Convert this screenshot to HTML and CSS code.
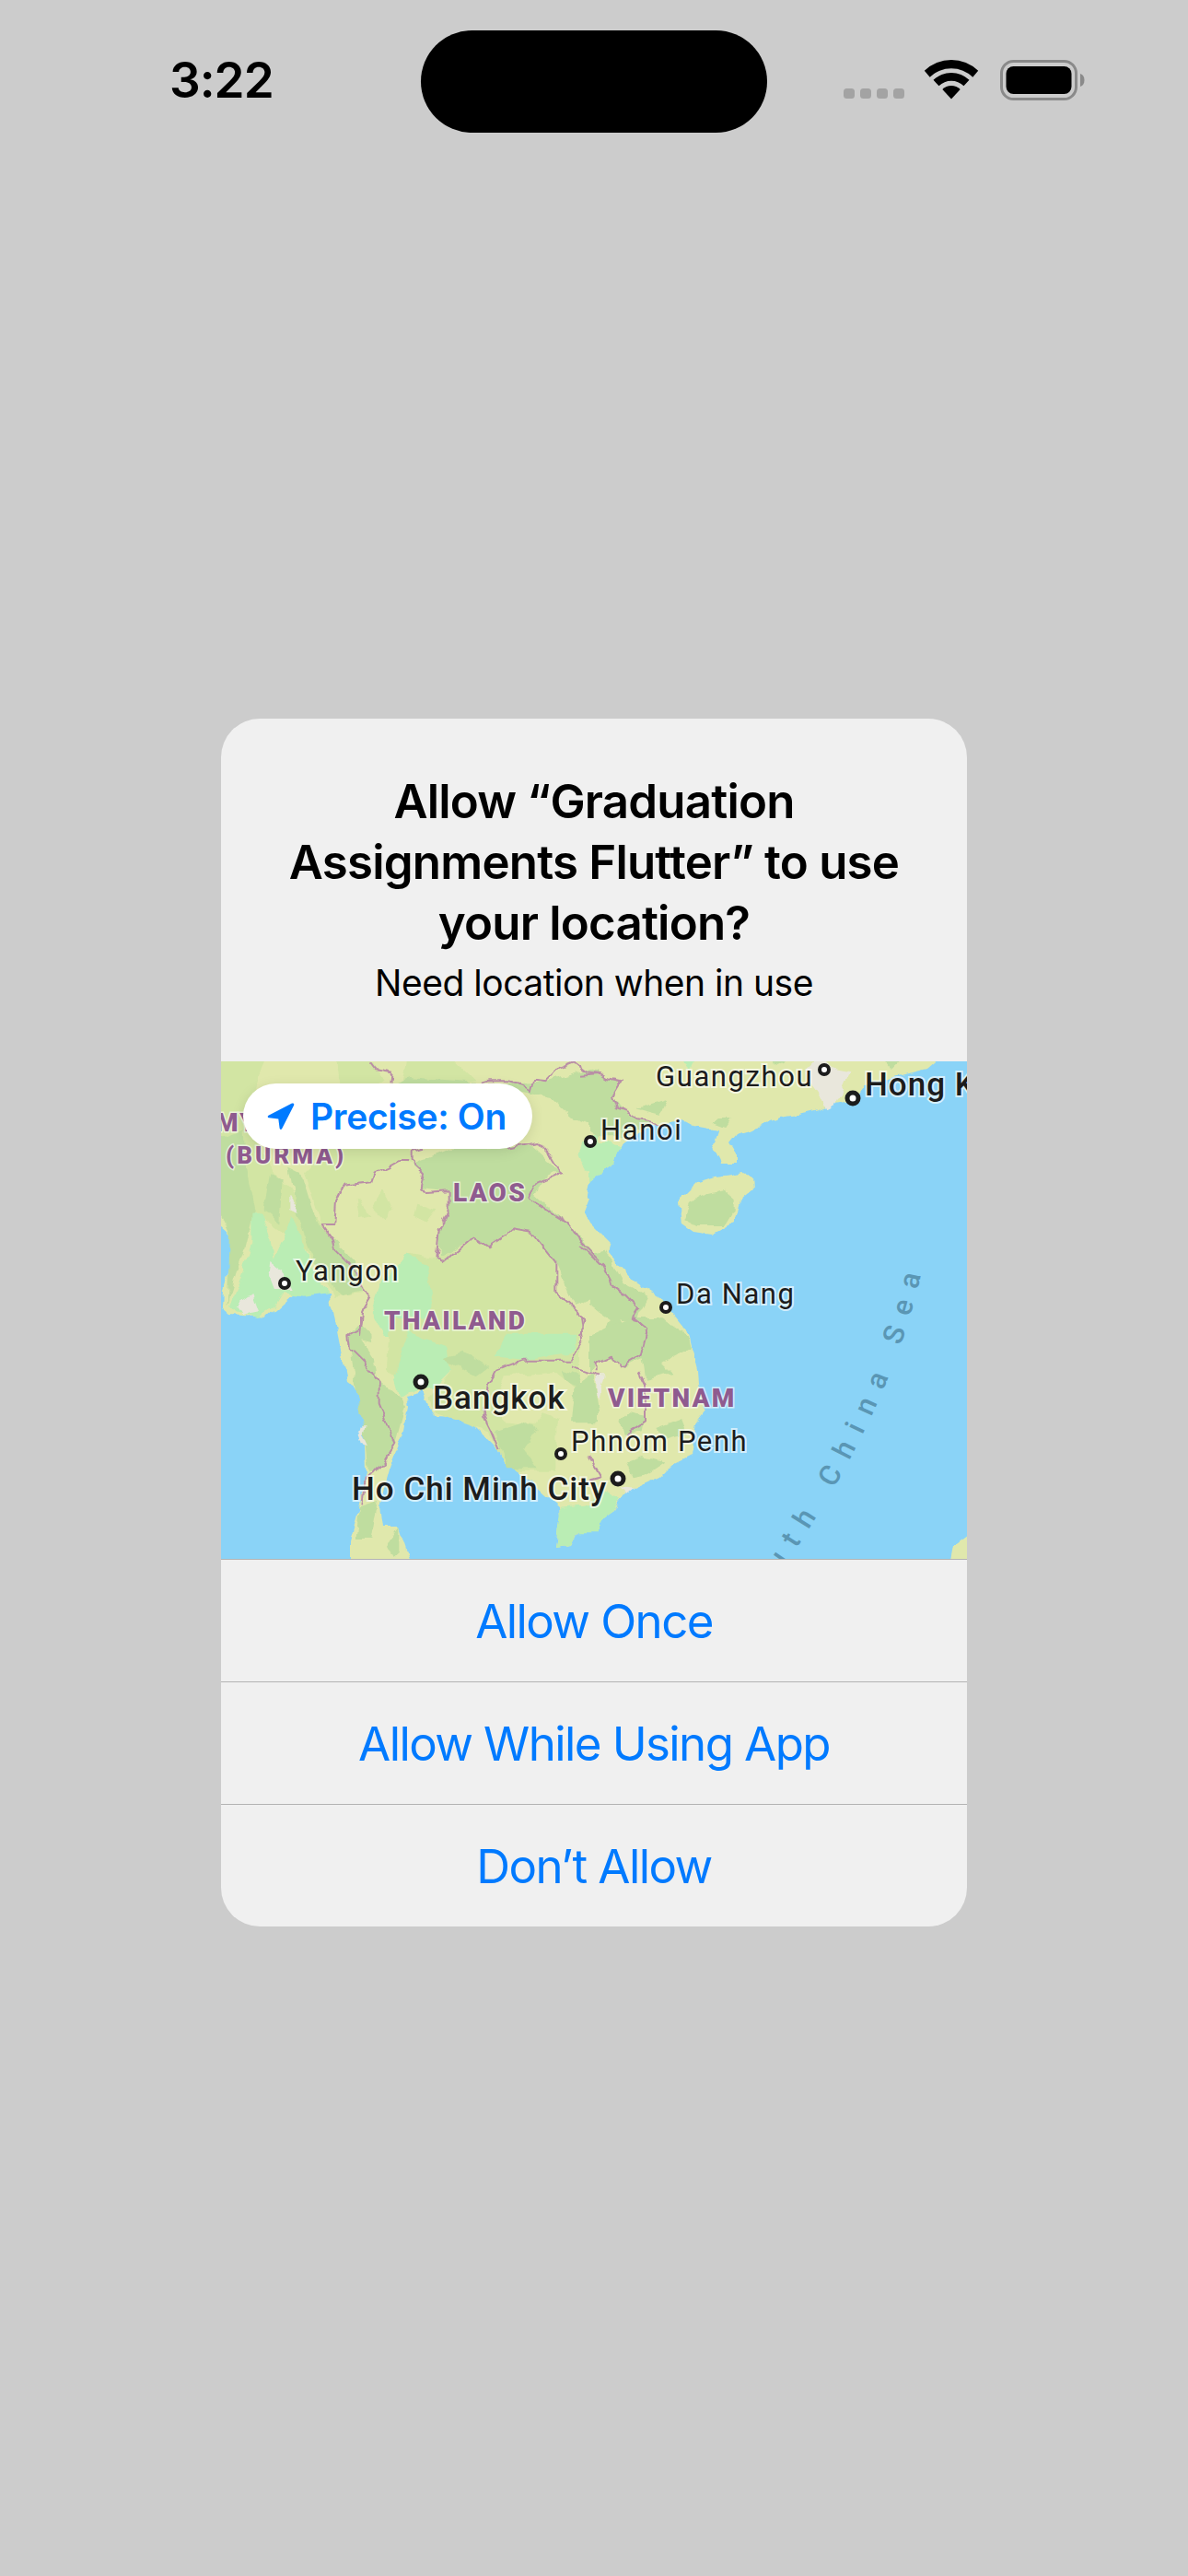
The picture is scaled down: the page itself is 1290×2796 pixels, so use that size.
FILE: index.html
```html
<!DOCTYPE html>
<html lang="en">
<head>
<meta charset="utf-8">
<title>Location permission</title>
<link rel="stylesheet" href="styles.css">
</head>
<body>
<header class="status">
  <div class="time">3:22</div>
  <div class="island"></div>
  <div class="indicators">
    <div class="signal"><i></i><i></i><i></i><i></i></div>
    <svg class="wifi" width="58" height="43" viewBox="0 0 58 43"><path d="M-.2 11.8A42 42 0 0 1 58.2 11.8L52.3 18.7A33.5 33.5 0 0 0 5.700 18.700Z"/><path d="M9.500 21.800A28 28 0 0 1 48.500 21.800L42.500 28.300A19.500 19.500 0 0 0 15.500 28.300Z"/><path d="M19.300 31.900A14 14 0 0 1 38.700 31.900L29 42.500Z"/></svg>
    <svg class="battery" width="92" height="44" viewBox="0 0 92 44"><rect x="1.500" y="1.500" width="81" height="41" rx="13" class="batt-shell"/><rect x="6.500" y="7" width="71" height="30" rx="8"/><path class="batt-cap" d="M87 15C90 16 91.500 18.500 91.500 22S90 28 87 29Z"/></svg>
  </div>
</header>

<main class="alert">
  <section class="alert-head">
    <h1 class="alert-title">Allow “Graduation Assignments Flutter” to use your location?</h1>
    <p class="alert-sub">Need location when in use</p>
  </section>

  <div class="map">
    <svg class="map-art" width="810" height="540" viewBox="0 0 810 540">
      <defs>
        <filter id="rough" x="-5%" y="-5%" width="110%" height="110%">
          <feTurbulence type="fractalNoise" baseFrequency=".07" numOctaves="2" seed="4"/>
          <feDisplacementMap in="SourceGraphic" scale="9" xChannelSelector="R" yChannelSelector="G"/>
        </filter>
      </defs>
      <rect class="sea" width="810" height="540"/>
      <g class="rough">
      <!-- land masses -->
      <path class="y" d="M-12 -12H790L767 8 700 25 687 42 667 46 648 53 627 58 607 61 587 70 560 78 552 88 560 101 560 111 543 111 533 91 538 75 513 70 500 63 470 68 433 91 427 111 400 131 393 161 400 175 423 198 420 208 447 238 477 258 507 295 517 335 518 348 525 378 515 391 510 428 490 438 477 451 443 466 433 478 427 488 400 506 387 511 380 525 363 528 368 491 367 485 320 441 307 435 298 418 273 393 257 386 230 385 220 358 200 363 203 375 198 401 183 441 172 481 175 505 193 505 203 535 210 552H140L140 521 150 485 157 445 155 391 147 355 137 348 123 278 118 251 80 251 50 278 10 275 2 268 3 248 13 215 10 188 -12 168Z"/>
      <path class="y" d="M497 151 517 131 537 125 557 123 567 120 577 125 578 138 563 151 557 175 533 188 513 185 500 176Z"/>
      <path class="y" d="M790 552 795 525 822 505V552Z"/>

      <g transform="translate(-10 -12) scale(.33333)">
        <path class="m" d="M0 0H190L150 90 100 250 0 240ZM0 240 120 250 200 400 360 570 400 640 470 720 490 790 400 800 300 640 130 520 0 540Z"/>
        <path class="d" d="M0 290 100 260 110 380 140 520 110 640 90 700 50 830 60 600 30 540Z"/>
        <path class="d" d="M190 400 230 420 220 560 170 520Z"/>
        <path class="d" d="M250 380 290 400 340 560 400 620 470 690 490 780 420 800 340 700 280 540Z"/>
        <path class="l" d="M130 530 160 525 190 610 200 680 260 540 300 630 320 700 380 790 300 800 230 790 200 840 150 870 80 850 60 830 100 720 130 630Z"/>
        <path class="m" d="M400 0H500L560 100 470 180 420 120ZM640 0H760L860 100 700 130 620 100Z"/>
        <path class="d" d="M640 90 900 110 1100 100 1230 60 1260 70V250L1180 220 1100 150 1000 130 800 220 640 300 480 340 420 200 560 120Z"/>
        <path class="m" d="M440 260 640 300 650 370 610 360 530 400 520 430 430 440 405 490 400 570 360 570 300 400Z"/>
        <path class="d" d="M650 370 780 320 1040 310 1140 400 1050 470 1160 560 1260 680V800L1180 830 1120 690 1040 590 980 580 900 640 850 605 800 640 740 680 740 590 770 520 770 460 680 450 690 400Z"/>
        <path class="m" d="M560 450 590 520 560 550 520 510ZM470 480 520 540 480 550ZM670 500 730 520 700 560 660 540Z"/>
        <path class="m" d="M640 660 730 680 810 640 850 605 900 640 980 580 1040 590 1120 690 1120 790 1190 850 1210 930H1000L720 930 550 780Z"/>
        <path class="l" d="M550 760 640 660 700 700 720 830 650 930H560L520 850Z"/>
        <path class="y" d="M1100 400 1140 400 1230 480 1210 530 1160 560 1050 470ZM1130 170 1180 260 1120 220Z"/>
        <path class="l" d="M1220 280 1260 270V400L1220 400 1190 340Z"/>
        <path class="c" d="M190 690 230 720 260 780 205 780 185 730ZM80 830 130 795 150 850 100 860ZM250 470 285 530 250 520Z"/>
      </g>

      <g transform="translate(400 -12) scale(.33333)">
        <path class="l" d="M0 300H60L100 310 80 370 0 430Z"/>
        <path class="d" d="M0 80H40L100 100 75 150 110 200 200 240 100 280 30 280 0 260ZM150 190 250 160 230 210ZM590 20H670L600 50ZM950 20H1020L980 60ZM420 225 460 225 440 255 400 240Z"/>
        <path class="l" d="M290 20H350L330 60Z"/>
        <path class="c" d="M710 60 750 20 800 60 850 70 800 180 770 195 745 140 700 80Z"/>
        <path class="d" d="M330 500 380 470 440 455 470 480 470 520 440 570 350 570 310 550Z"/>
        <path class="d" d="M0 660 50 650 110 760 190 800 150 880 190 930H0Z"/>
        <path class="y" d="M0 830 70 880 40 930H0ZM100 870 190 910 130 930Z"/>
      </g>

      <g transform="translate(-10 278) scale(.33333)">
        <path class="d" d="M445 60 480 20 520 60 540 200 610 260 630 290 600 400 540 500 510 500 490 340 470 230Z"/>
        <path class="y" d="M490 70 570 90 590 170 540 150Z"/>
        <path class="m" d="M580 0 1200 0 1200 200 1120 340 1120 500 1000 500 950 470 900 370 720 310 710 260 780 170 640 240 570 170Z"/>
        <path class="l" d="M590 190 640 50 770 100 780 170 720 230 640 240 610 260Z"/>
        <path class="l" d="M920 130 960 50 1190 50 1180 110 1010 140Z"/>
        <path class="d" d="M750 130 820 110 900 160 860 190ZM1140 170 1200 190 1190 230 1150 210Z"/>
        <path class="y" d="M950 190 1120 180 1190 240 1160 340 1080 310 1050 350 950 340 920 280Z"/>
        <path class="d" d="M920 370 1010 340 1060 360 1020 430 1060 490 960 490 950 450Z"/>
        <path class="d" d="M1180 230 1240 180 1260 300 1260 340 1170 340Z"/>
        <path class="l" d="M1120 750 1135 620 1260 610V700L1190 700 1170 740Z"/>
        <path class="d" d="M480 620 540 600 520 720 470 720ZM570 740 610 680 610 760 590 780Z"/>
        <path class="c" d="M488 355 500 355 492 385 508 420 485 415 478 390Z"/>
      </g>

      <g transform="translate(400 278) scale(.33333)">
        <path class="d" d="M0 60 130 0H230L320 60 330 100 240 150 270 180 180 200 170 130 110 160 70 130 20 150 0 180Z"/>
        <path class="d" d="M100 340 130 310 180 320 170 370 110 380ZM220 360 300 330 320 380 250 400ZM120 470 170 450 250 470 190 510 140 520Z"/>
        <path class="l" d="M0 600 40 560 100 590 80 630 40 660 0 685Z"/>
        <path class="c" d="M20 190 50 190 30 270 20 240ZM100 555 140 560 120 575Z"/>
      </g>

      <!-- borders -->
      <g class="borders">
        <g transform="translate(-10 -12) scale(.33333)">
          <path d="M515 40 530 60 585 70 580 100"/>
          <path d="M870 110 900 100 970 100 1010 110 1040 130 1050 95 1090 100 1130 60 1180 40 1220 70 1260 75"/>
          <path d="M640 360 610 360 575 380 530 400 520 430 430 440 405 490 400 570 360 570 390 610 400 650 470 720 490 780 520 800 490 850 480 930"/>
          <path d="M690 320 650 330 650 360 690 400 680 450 700 465 770 460 770 520 740 590 730 680 750 690 810 640 850 605 900 640 960 600 980 580 1040 590 1120 690 1120 790 1190 850 1210 880 1200 930"/>
          <path d="M960 320 1060 300 1110 350 1140 400 1050 440 1030 480 1160 560 1200 620 1260 680"/>
        </g>
        <g transform="translate(400 -12) scale(.33333)">
          <path d="M-30 80 35 75 60 90 105 100 75 150 90 190 130 205 160 225 230 240"/>
          <path d="M-30 640 0 660 40 700 70 760 110 790 160 840 140 870 190 910 185 930"/>
        </g>
        <g transform="translate(-10 278) scale(.33333)">
          <path d="M480 0 480 40 445 60 450 100 520 170 545 210 545 280 570 340 595 410 560 470 530 505 500 520 490 610"/>
          <path d="M1200 0 1210 80 1170 140 1010 140 930 170 900 220 885 320 910 370 935 430"/>
          <path d="M1170 160 1260 190"/>
        </g>
        <g transform="translate(400 278) scale(.33333)">
          <path d="M145 0 190 40 175 100 165 120 100 160 75 125 20 150 20 175"/>
          <path d="M160 180 180 220 180 340 120 380"/>
          <path d="M0 450 40 520 0 530"/>
        </g>
      </g>
      </g>

      <!-- sea name -->
      <path id="sea-arc" class="guide" d="M543 640Q723 415 763 218"/>
      <text class="sea-name"><textPath href="#sea-arc" startOffset="100%">South China Sea</textPath></text>

      <!-- countries -->
      <text class="country wide" x="-6" y="76">MY</text>
      <text class="country burma" x="5" y="111">(BURMA)</text>
      <text class="country" x="252" y="152">LAOS</text>
      <text class="country" x="177" y="291">THAILAND</text>
      <text class="country" x="420" y="375">VIETNAM</text>

      <!-- cities -->
      <g class="dots">
        <circle cx="69" cy="241" r="5"/><circle cx="401" cy="87" r="5"/><circle cx="655" cy="9" r="5"/>
        <circle cx="483" cy="267" r="5"/><circle cx="369" cy="426" r="5"/>
        <circle class="big" cx="686" cy="40" r="6"/><circle class="big" cx="217" cy="348" r="6"/><circle class="big" cx="431" cy="453" r="6"/>
      </g>
      <text class="city" x="81" y="238">Yangon</text>
      <text class="city" x="412" y="85">Hanoi</text>
      <text class="city" x="472" y="27">Guangzhou</text>
      <text class="city" x="494" y="263">Da Nang</text>
      <text class="city" x="380" y="423">Phnom Penh</text>
      <text class="city major" x="699" y="37">Hong Kong</text>
      <text class="city major" x="230" y="377">Bangkok</text>
      <text class="city major" x="142" y="476">Ho Chi Minh City</text>
    </svg>
    <div class="precise">
      <svg class="arrow" width="30" height="30" viewBox="0 0 30 30"><path d="M1.500 14.800 27 1.600C28.600.900 29.800 2.100 29.100 3.700L16.200 29C15.400 30.500 13.800 30.200 13.600 28.600L12.300 18.600 2.200 17.300C.6 17.100.2 15.500 1.500 14.800Z"/></svg>
      <span>Precise: On</span>
    </div>
  </div>

  <div class="action">Allow Once</div>
  <div class="action">Allow While Using App</div>
  <div class="action">Don’t Allow</div>
</main>
</body>
</html>
```
FILE: styles.css
```css
* { box-sizing: border-box; }
html, body { margin: 0; padding: 0; }
body {
  width: 1290px;
  height: 2796px;
  background: #cccccc;
  font-family: Inter, "Liberation Sans", sans-serif;
  overflow: hidden;
}

.status {
  display: flex;
  align-items: flex-start;
  height: 780px;
  padding: 33px 0 0 184px;
}
.time {
  width: 273px;
  margin-top: 22px;
  font-size: 53px;
  line-height: 64px;
  font-weight: 600;
  color: #000;
  letter-spacing: -1px;
}
.island {
  width: 376px;
  height: 111px;
  border-radius: 56px;
  background: #000;
}
.indicators {
  display: flex;
  align-items: flex-start;
  margin: 32px 0 0 83px;
}
.signal {
  display: flex;
  gap: 6.500px;
  margin: 31px 22px 0 0;
}
.signal i {
  display: block;
  width: 11.500px;
  height: 11px;
  border-radius: 3.500px;
  background: #a3a3a3;
}
.wifi { margin-right: 24px; overflow: visible; }
.batt-shell { fill: none; stroke: #8a8a8a; stroke-width: 3; }
.batt-cap { fill: #8a8a8a; }

.alert {
  width: 810px;
  margin-left: 240px;
  border-radius: 42px;
  background: #f0f0f0;
  overflow: hidden;
}
.alert-head {
  height: 372px;
  padding: 57px 60px 0;
  text-align: center;
  color: #000;
}
.alert-title {
  margin: 0;
  font-size: 51px;
  line-height: 66px;
  font-weight: 600;
  letter-spacing: -.8px;
}
.alert-sub {
  margin: 8px 0 0;
  font-size: 39px;
  line-height: 48px;
  font-weight: 400;
  letter-spacing: -.5px;
}

.map {
  position: relative;
  height: 541px;
  border-bottom: 1px solid #b3b3b3;
}
.map-art { display: block; }
.rough { filter: url(#rough); }
.sea { fill: #8ad3f7; }
.y { fill: #e0e8ac; }
.m { fill: #d2e5a3; }
.d { fill: #bfdd9f; }
.l { fill: #baedb4; }
.c { fill: #e9e7dc; }
.borders path {
  fill: none;
  stroke: #b98ea6;
  stroke-width: 6;
  stroke-linejoin: round;
}
.guide { fill: none; }
.sea-name {
  font-family: Roboto, sans-serif;
  font-size: 31px;
  font-weight: 500;
  letter-spacing: 14px;
  text-anchor: end;
  fill: #5a96b4;
}
.country {
  font-family: Roboto, sans-serif;
  font-weight: 900;
  font-size: 28px;
  letter-spacing: 2.200px;
  fill: #8f5b8f;
  stroke: rgba(255, 255, 255, .6);
  stroke-width: 3px;
  paint-order: stroke;
}
.country.burma { font-size: 26px; letter-spacing: 3px; }
.country.wide { letter-spacing: 2px; }
.city {
  font-family: Roboto, sans-serif;
  font-size: 31px;
  letter-spacing: 1.600px;
  fill: #1c1c1c;
  stroke: rgba(255, 255, 255, .65);
  stroke-width: 4px;
  paint-order: stroke;
}
.city.major { font-size: 35px; font-weight: 500; letter-spacing: 1px; }
.dots circle { fill: #fff; stroke: #1c1c1c; stroke-width: 4; }
.dots .big { stroke-width: 5; }

.precise {
  position: absolute;
  left: 24px;
  top: 24px;
  display: flex;
  align-items: center;
  width: 314px;
  height: 71px;
  padding-left: 26px;
  border-radius: 36px;
  background: #fff;
  box-shadow: 0 3px 14px rgba(0, 0, 0, .1);
  color: #007aff;
  font-size: 39px;
  font-weight: 600;
  letter-spacing: -.3px;
}
.arrow { fill: #007aff; margin-right: 17px; margin-top: -2px; }

.action {
  display: flex;
  align-items: center;
  justify-content: center;
  height: 133px;
  border-top: 1px solid #b3b3b3;
  color: #007aff;
  font-size: 51px;
  letter-spacing: -1.600px;
}
.map + .action { height: 132px; border-top: 0; }
```
